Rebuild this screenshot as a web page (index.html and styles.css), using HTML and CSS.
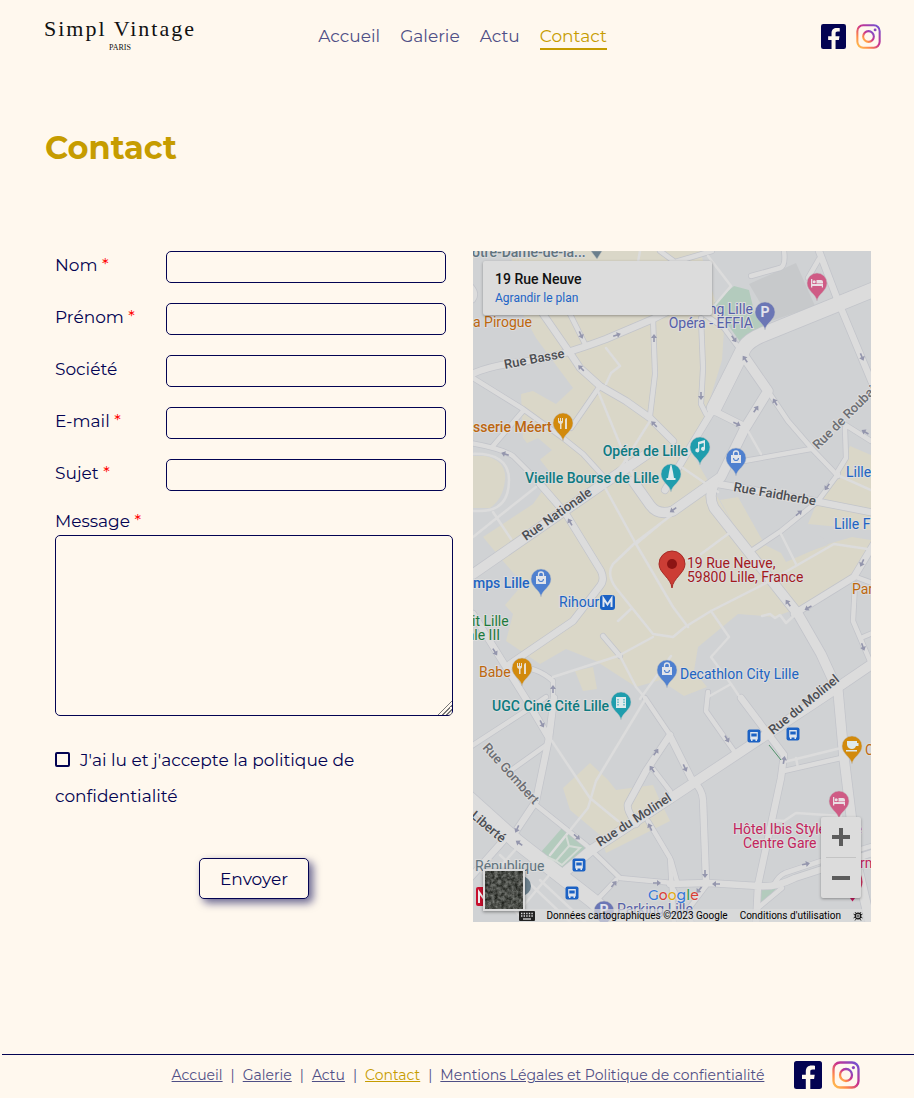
FILE: index.html
```html
<!DOCTYPE html>
<html lang="fr">
<head>
<meta charset="utf-8">
<meta name="viewport" content="width=device-width, initial-scale=1">
<title>Contact - Simpl Vintage</title>
<link rel="stylesheet" href="styles.css">
</head>
<body>
<svg class="sprite" aria-hidden="true">
  <defs>
    <linearGradient id="insta" x1="0" y1="1" x2="1" y2="0">
      <stop offset="0" stop-color="#ffc550"/><stop offset=".25" stop-color="#ff8a4a"/>
      <stop offset=".55" stop-color="#c9308e"/><stop offset="1" stop-color="#6a55d8"/>
    </linearGradient>
    <symbol id="facebook" viewBox="0 0 28 28">
      <rect width="28" height="28" rx="2.5" fill="#030352"/>
      <path d="M11.8 28V18H8v-4.3h3.8v-3.2c0-3.8 2.3-5.9 5.7-5.9 1.600 0 3 .1 3.500.2v3.700h-2.300c-1.900 0-2.400.9-2.400 2.300v2.900h4.400l-.6 4.300h-3.800v10z" fill="#fff8ee"/>
    </symbol>
    <symbol id="instagram" viewBox="0 0 28 28">
      <g fill="none" stroke="url(#insta)" stroke-width="2.300">
        <rect x="1.500" y="1.500" width="25" height="25" rx="6.500"/>
        <circle cx="14" cy="14" r="6"/>
      </g>
      <circle cx="21.400" cy="6.600" r="1.600" fill="#8a45c0"/>
    </symbol>
  </defs>
</svg>

<header class="header">
  <a class="logo" href="#"><span class="logo-name">Simpl Vintage</span><span class="logo-city">PARIS</span></a>
  <nav class="nav" aria-label="Navigation principale">
    <a href="#">Accueil</a>
    <a href="#">Galerie</a>
    <a href="#">Actu</a>
    <a class="current" href="#">Contact</a>
  </nav>
  <div class="social">
    <a href="#" aria-label="Facebook"><svg><use href="#facebook"/></svg></a>
    <a href="#" aria-label="Instagram"><svg><use href="#instagram"/></svg></a>
  </div>
</header>

<main class="main">
  <h1 class="title">Contact</h1>
  <div class="columns">
    <form class="form">
      <div class="row"><label for="nom">Nom <span class="required">*</span></label><input id="nom" type="text"></div>
      <div class="row"><label for="prenom">Prénom <span class="required">*</span></label><input id="prenom" type="text"></div>
      <div class="row"><label for="societe">Société</label><input id="societe" type="text"></div>
      <div class="row"><label for="email">E-mail <span class="required">*</span></label><input id="email" type="email"></div>
      <div class="row"><label for="sujet">Sujet <span class="required">*</span></label><input id="sujet" type="text"></div>
      <div class="message">
        <label for="message">Message <span class="required">*</span></label>
        <textarea id="message"></textarea>
      </div>
      <p class="consent"><input id="consent" type="checkbox"><label for="consent">J'ai lu et j'accepte la politique de confidentialité</label></p>
      <button class="submit" type="submit">Envoyer</button>
    </form>

    <section class="map" aria-label="Plan">
      <svg class="map-canvas" viewBox="473 251 398 671" preserveAspectRatio="xMidYMid slice">
        <defs>
          <path id="pin" d="M0 18C-1 11-10 8-10 0A10 10 0 1 1 10 0C10 8 1 11 0 18Z"/>
          <path id="arrow" d="M-4-.8H0V-3L4 0 0 3V.8H-4Z"/>
          <g id="bag"><path d="M-5-3H5V5H-5Z" fill="#e1e4ea"/><path d="M-2.500-3V-4.500A2.500 2.500 0 0 1 2.500-4.500V-3" fill="none" stroke="#e1e4ea" stroke-width="1.300"/><path d="M-2.500 0A2.500 2.500 0 0 0 2.500 0" fill="none" stroke="#4f80cf" stroke-width="1.200"/></g>
          <g id="fork" fill="#e9e0cf"><path d="M-5-5h1v3h1v-3h1v3h1v-3h1v4q0 1-1.500 2V6h-1.500V1Q-5 0-5-1Z"/><path d="M2 6V-3q0-2 2-2V6Z"/></g>
          <g id="bed" fill="#eadfe4"><path d="M-6-4h1.300V1H6V4.500H4.800V3H-4.700v1.500H-6Z"/><circle cx="-2.800" cy="-1.300" r="1.500"/><path d="M-.5-3H4Q6-3 6-1V.5H-.5Z"/></g>
          <g id="bus"><rect x="-6.500" y="-6.500" width="13" height="13" rx="2" fill="#1c62c4"/><path d="M-3.800-4h7.600V3.500H3V5H1.500V3.500h-3V5H-3V3.500h-.8Z" fill="#dfe5ee"/><path d="M-2.700-2.500h5.400V.5h-5.400Z" fill="#1c62c4"/></g>
          <g id="r-large" >
            <path d="M875 289 838 304 764 334Q749 340 744 348L731 374 714 408"/>
            <path d="M465 795 516 841 593 901 620 925"/>
          </g>
          <g id="r-wide">
            <path d="M473 574 603 484 650 452"/>
            <path d="M875 662 828 694 671 798 590 851 566 871"/>
            <path d="M633 481 650 505Q658 516 673 511L721 477 744 430 768 391 741 352"/>
            <path d="M714 484Q708 496 714 508L748 551 798 614 821 654 838 691 844 758 851 815 858 870 870 922"/>
          </g>
          <g id="r-mid">
            <path d="M470 375Q490 365 530 361 558 357 606 339L653 319 673 309"/>
            <path d="M718 484 814 501 875 513M714 408 688 451 665 490"/>
            <path d="M510 265 543 314 570 353 580 368 600 386 626 401 650 418 673 441"/>
            <path d="M819 251 838 301 875 390M714 411 744 426M473 614 506 667 526 699 549 738"/>
            <path d="M540 484 566 514 601 571Q605 580 600 586L573 621 510 664"/>
            <path d="M554 698 549 738 536 801 516 831M503 841 470 878M794 614 854 577 875 542"/>
            <path d="M670 735 646 771 628 804Q626 809 636 824M671 738 691 778Q703 790 703 800L706 881"/>
            <path d="M670 884 708 883 758 886Q775 888 795 878L875 852M741 698 784 755 781 778 758 885 756 925"/>
          </g>
          <g id="r-small">
            <path d="M473 378 523 409 563 438 583 454 603 476M523 411 493 446M470 443Q500 448 513 456L533 476"/>
            <path d="M570 314 585 344M653 319 655 374 650 416M600 386 571 428"/>
            <path d="M768 391 788 421 814 451 838 476M701 318 703 368 701 404 706 414M704 314 724 328 741 351"/>
            <path d="M751 276 780 268Q786 266 784 251M808 278 819 259M744 461 811 449M844 424 871 441M845 428 846 458 838 471"/>
            <path d="M838 474 818 501 781 531 751 551M856 577 875 584M855 584 853 621 870 661M863 637 875 632"/>
            <path d="M510 667Q535 665 553 681V699M470 747 530 708 546 697M545 746 510 771M650 765 670 791"/>
            <path d="M645 698 670 735M648 821 670 858 674 925M536 805 586 845 620 878 673 883M616 880 596 901"/>
            <path d="M708 692 706 711 734 751M774 885Q778 876 785 873L821 861 875 845M784 771 841 758M671 860 678 885"/>
            <path d="M603 636 620 656M758 908 782 888M706 886 690 907M693 925 671 885"/>
            <path d="M473 300Q478 293 470 285M675 262 712 251M675 262 660 251"/>
          </g>
          <g id="r-thin">
            <path d="M606 348 620 366 611 373 606 384M598 391 633 476M650 421 623 464 605 484M640 251 638 262"/>
            <path d="M470 454Q509 452 509 480 509 511 480 511H470M473 537 493 521 536 487M493 512 511 539"/>
            <path d="M708 256 731 286 714 306M748 431 761 454M781 534 796 564M728 534 701 554M683 468 718 492"/>
            <path d="M673 514 636 542 613 564Q606 574 616 588L653 634 673 637 685 627 711 611 768 582 834 544 875 550"/>
            <path d="M603 484 636 544 673 607 688 627M653 637 618 656 553 677M631 609 618 621M636 544 660 524"/>
            <path d="M711 611 729 637 711 657 731 684 741 699M731 684 708 697M671 656 640 699M620 656 636 687 646 699"/>
            <path d="M548 735 590 798 618 821M646 698 596 781 588 808 550 855M536 805 580 840M784 762 841 748M796 758 798 768"/>
            <path d="M771 820 784 821 796 813 841 816M835 474 871 490M762 616 770 614 775 618 780 615 786 623 797 613"/>
            <path d="M500 855 570 922M480 870 525 922M555 868 520 910M515 850 480 890M540 880 585 922"/>
          </g>
        </defs>
        <path fill="#d0d2d4" d="M473 251h398v671H473z"/>
        <g fill="#dad7c8">
          <path d="M510 251H700L715 300 724 330 722 360 706 412 690 450 714 491 748 551 798 608 775 617 738 614 698 647 694 671 707 687 684 696 660 680 636 687 596 661 566 649 540 664 506 641 513 614 505 605 523 584 503 561 483 537 533 504 553 476 523 438 521 394 533 391 556 404 573 388 536 338 523 314Z"/>
          <path d="M838 474 850 446 871 455V547L854 577 800 610 748 551 720 500 738 497 765 545 781 553 786 562 825 545 852 537 871 540V530L808 524 818 500Z"/>
          <path d="M563 788 590 763 608 780 616 790 653 785 660 801 670 821 606 853 600 835 570 810ZM473 251h10l-10 8zM473 456h12q22 5 20 24t-15 28h-17zM575 671l18-4 4 22-14 2z"/>
        </g>
        <path fill="#d0d2d4" d="M800 545l20-10 8 10-24 8zM523 445l15-7 14 12-15 12 10 14-14 14-10-26z"/>
        <path fill="#c7c9cb" d="M749 284 796 263 815 306 771 321Z"/>
        <path fill="#b3cbbd" d="M734 286 749 290 755 315 772 329 741 343 728 325 714 303ZM541 852 562 828 586 848 560 873ZM759 888h18l-18 17z"/>
        <g fill="none" stroke="#c2c4ca" stroke-linejoin="round" stroke-linecap="round">
          <use href="#r-small" stroke-width="6"/><use href="#r-mid" stroke-width="8"/><use href="#r-wide" stroke-width="11"/><use href="#r-large" stroke-width="16"/>
        </g>
        <g fill="none" stroke="#dcdcdc" stroke-linejoin="round" stroke-linecap="round">
          <use href="#r-thin" stroke-width="2.500"/><use href="#r-small" stroke-width="4.500"/><use href="#r-mid" stroke-width="6.500"/><use href="#r-wide" stroke-width="9.500"/><use href="#r-large" stroke-width="14.500"/>
        </g>
        <g fill="none" stroke="#d5dbd6" stroke-width="2"><path d="M566 835 569 846 556 861 547 857M569 846 580 848 562 865 556 861"/></g>
        <path d="M769 745 781 760" stroke="#4f8f68"/>
        <g fill="#9496ad">
          <use href="#arrow" transform="translate(617 335)rotate(-18)"/><use href="#arrow" transform="translate(581 335)rotate(65)"/>
          <use href="#arrow" transform="translate(581 368)rotate(-135)"/><use href="#arrow" transform="translate(654 338)rotate(-90)"/>
          <use href="#arrow" transform="translate(654 424)rotate(-135)"/><use href="#arrow" transform="translate(505 454)rotate(200)"/>
          <use href="#arrow" transform="translate(734 339)rotate(55)"/><use href="#arrow" transform="translate(745 359)rotate(-125)"/>
          <use href="#arrow" transform="translate(701 396)rotate(90)"/><use href="#arrow" transform="translate(756 409)rotate(-55)"/>
          <use href="#arrow" transform="translate(775 402)rotate(-120)"/><use href="#arrow" transform="translate(737 424)rotate(25)"/>
          <use href="#arrow" transform="translate(862 357)rotate(67)"/><use href="#arrow" transform="translate(865 432)rotate(210)"/>
          <use href="#arrow" transform="translate(827 487)rotate(125)"/><use href="#arrow" transform="translate(799 513)rotate(-40)"/>
          <use href="#arrow" transform="translate(673 510)rotate(145)"/><use href="#arrow" transform="translate(862 563)rotate(115)"/>
          <use href="#arrow" transform="translate(788 603)rotate(-125)"/><use href="#arrow" transform="translate(808 608)rotate(150)"/>
          <use href="#arrow" transform="translate(863 647)rotate(70)"/><use href="#arrow" transform="translate(570 522)rotate(-120)"/>
          <use href="#arrow" transform="translate(495 652)rotate(58)"/><use href="#arrow" transform="translate(553 689)rotate(-90)"/>
          <use href="#arrow" transform="translate(542 724)rotate(62)"/><use href="#arrow" transform="translate(517 829)rotate(115)"/>
          <use href="#arrow" transform="translate(519 843)rotate(215)"/><use href="#arrow" transform="translate(577 837)rotate(40)"/>
          <use href="#arrow" transform="translate(656 752)rotate(-55)"/><use href="#arrow" transform="translate(652 769)rotate(-125)"/>
          <use href="#arrow" transform="translate(650 827)rotate(-115)"/><use href="#arrow" transform="translate(614 884)rotate(-50)"/>
          <use href="#arrow" transform="translate(657 883)"/><use href="#arrow" transform="translate(716 884)rotate(180)"/>
          <use href="#arrow" transform="translate(705 874)rotate(90)"/><use href="#arrow" transform="translate(685 768)rotate(65)"/>
          <use href="#arrow" transform="translate(727 739)rotate(60)"/><use href="#arrow" transform="translate(784 760)rotate(-80)"/>
          <use href="#arrow" transform="translate(806 864)rotate(-12)"/><use href="#arrow" transform="translate(699 890)rotate(130)"/>
        </g>
        <g class="label street">
          <text transform="translate(505 369)rotate(-11)">Rue Basse</text>
          <text transform="translate(526 541)rotate(-35)">Rue Nationale</text>
          <text transform="translate(733 491)rotate(10)">Rue Faidherbe</text>
          <text class="minor" transform="translate(818 450)rotate(-45)">Rue de Roubaix</text>
          <text class="minor" transform="translate(482 748)rotate(48)">Rue Gombert</text>
          <text transform="translate(470 817)rotate(40)">Liberté</text>
          <text transform="translate(600 847)rotate(-33)">Rue du Molinel</text>
          <text transform="translate(773 735)rotate(-39)">Rue du Molinel</text>
        </g>
        <g class="label place">
          <text class="slate bold" x="472" y="257">otre-Dame-de-la...</text>
          <text class="orange" x="473" y="327">a Pirogue</text>
          <text class="indigo end" x="753" y="314">Parking Lille</text>
          <text class="indigo end" x="753" y="328">Opéra - EFFIA</text>
          <text class="orange bold" x="473" y="432">sserie Méert</text>
          <text class="teal bold end" x="688" y="456">Opéra de Lille</text>
          <text class="teal bold end" x="659" y="483">Vieille Bourse de Lille</text>
          <text class="blue" x="846" y="477">Lille</text>
          <text class="blue" x="834" y="529">Lille Flandres</text>
          <text class="red" x="687" y="568">19 Rue Neuve,</text>
          <text class="red" x="687" y="582">59800 Lille, France</text>
          <text class="orange" x="852" y="594">Parmi</text>
          <text class="blue bold" x="473" y="588">mps Lille</text>
          <text class="blue" x="559" y="607">Rihour</text>
          <text class="green" x="472" y="626">it Lille</text>
          <text class="green end" x="500" y="640">ale III</text>
          <text class="orange" x="479" y="677">Babe</text>
          <text class="blue" x="680" y="679">Decathlon City Lille</text>
          <text class="teal bold end" x="609" y="711">UGC Ciné Cité Lille</text>
          <text class="orange" x="865" y="755">C</text>
          <text class="pink" x="733" y="834">Hôtel Ibis Styles Lille</text>
          <text class="pink" x="743" y="848">Centre Gare</text>
          <text class="pink" x="860" y="868">rm</text>
          <text class="slate" x="475" y="871">République</text>
          <text class="indigo" x="617" y="914">Parking Lille</text>
        </g>
        <g stroke="#bfc0c2" stroke-width=".5">
          <path d="M591 251h11l-5 8z" fill="#6b7f8c"/>
          <use href="#pin" x="563" y="423" fill="#d28a0c"/><use href="#pin" x="522" y="668" fill="#d28a0c"/><use href="#pin" x="852" y="746" fill="#d28a0c"/>
          <use href="#pin" x="817" y="283" fill="#cf5b85"/><use href="#pin" x="839" y="801" fill="#cf5b85"/>
          <use href="#pin" x="765" y="312" fill="#6b76b5"/><use href="#pin" x="604" y="911" fill="#6b76b5"/>
          <use href="#pin" x="700" y="447" fill="#1f9dad"/><use href="#pin" x="671" y="474" fill="#1f9dad"/><use href="#pin" x="621" y="702" fill="#1f9dad"/>
          <use href="#pin" x="736" y="458" fill="#4f80cf"/><use href="#pin" x="541" y="579" fill="#4f80cf"/><use href="#pin" x="667" y="670" fill="#4f80cf"/>
        </g>
        <use href="#fork" x="563" y="423"/><use href="#fork" x="522" y="668"/>
        <use href="#bed" x="817" y="283"/><use href="#bed" x="839" y="801"/>
        <use href="#bag" x="736" y="458"/><use href="#bag" x="541" y="579"/><use href="#bag" x="667" y="670"/>
        <g class="pin-letter"><text x="765" y="317">P</text><text x="604" y="915">P</text></g>
        <g fill="#dfeaec">
          <path d="M698 442l7-2v9a2 2 0 1 1-1.300-2v-4l-4.400 1.300v6.200a2 2 0 1 1-1.300-2z"/>
          <path d="M670.500 465h1l1.500 7 1 6h1.500v2h-9v-2h1.500l1-6z"/>
          <path d="M616 697h10v11h-10z"/><path d="M618 699v7M624 699v7" stroke="#1f9dad" stroke-dasharray="1.500 1"/>
          <path d="M847 741h10v2h1.500v3H856q-1 3-4 3-4 0-5-4zM846 750h11v1.500h-11z"/>
        </g>
        <path d="M672 588C671 578 659 573 659 564a13 13 0 1 1 26 0C685 573 673 578 672 588Z" fill="#cc3d35" stroke="#a62a26"/><circle cx="672" cy="564" r="5" fill="#8c1414"/>
        <rect x="600" y="595" width="15" height="15" rx="3" fill="#1c62c4"/><path d="M603.500 607v-8.500l4 6 4-6v8.500" fill="none" stroke="#e3e8f0" stroke-width="2"/>
        <use href="#bus" x="754" y="736"/><use href="#bus" x="793" y="734"/><use href="#bus" x="579" y="865"/><use href="#bus" x="572" y="893"/>
        <path d="M484 887h-6q-2 0-2 2v15q0 2 2 2h6z" fill="#c8102e"/><path d="M479 903v-11l5 7" fill="none" stroke="#eee" stroke-width="2"/>
        <circle cx="521" cy="886" r="10" fill="#6b7f8c"/>
        <path d="M850 898h5l-2.500 3.500z" fill="#c2185b"/><path d="M861 875q3 7 0 13z" fill="#c9305c"/>
      </svg>
      <div class="place-card"><strong>19 Rue Neuve</strong><a href="#">Agrandir le plan</a></div>
      <button class="satellite" type="button" aria-label="Vue satellite">
        <svg><filter id="ground" color-interpolation-filters="sRGB"><feTurbulence type="fractalNoise" baseFrequency=".3" numOctaves="4" seed="4"/><feColorMatrix values=".55 0 0 0 .02  .55 0 0 0 .03  .55 0 0 0 .01  0 0 0 0 1"/></filter><rect width="100%" height="100%" filter="url(#ground)"/></svg>
      </button>
      <div class="zoom">
        <button type="button" aria-label="Zoom avant"><svg viewBox="0 0 18 18"><path d="M0 9h18M9 0v18"/></svg></button>
        <button type="button" aria-label="Zoom arrière"><svg viewBox="0 0 18 18"><path d="M0 9h18"/></svg></button>
      </div>
      <div class="google"><span>G</span><span>o</span><span>o</span><span>g</span><span>l</span><span>e</span></div>
      <div class="credits">
        <svg class="keyboard" viewBox="0 0 16 10"><rect width="16" height="10" rx="1" fill="#222"/><path d="M2 2.500h12M2 5h12" stroke="#ddd" stroke-width="1.400" stroke-dasharray="1.400 1.200"/><path d="M4 8h8" stroke="#ddd" stroke-width="1.300"/></svg>
        <span>Données cartographiques ©2023 Google</span>
        <a href="#">Conditions d'utilisation</a>
        <svg class="bug" viewBox="0 0 10 10" fill="none" stroke="#111" stroke-width=".8"><circle cx="5" cy="5" r="2.800" stroke-width="1.200"/><path d="M3.500 4.200h3M3.500 5.800h3M3 2.500 2 1M7 2.500 8 1M2.500 4 .5 3M7.500 4 9.500 3M2.500 6 .5 7M7.500 6 9.500 7M3 8 2 9.500M7 8 8 9.500"/></svg>
      </div>
    </section>
  </div>
</main>

<footer class="footer">
  <nav class="footer-nav" aria-label="Pied de page">
    <a href="#">Accueil</a><span>|</span>
    <a href="#">Galerie</a><span>|</span>
    <a href="#">Actu</a><span>|</span>
    <a class="current" href="#">Contact</a><span>|</span>
    <a href="#">Mentions Légales et Politique de confientialité</a>
  </nav>
  <div class="social social-footer">
    <a href="#" aria-label="Facebook"><svg><use href="#facebook"/></svg></a>
    <a href="#" aria-label="Instagram"><svg><use href="#instagram"/></svg></a>
  </div>
</footer>
</body>
</html>
```
FILE: styles.css
```css
:root {
  --navy: #030352;
  --link: #4f4f86;
  --gold: #c69c00;
  --cream: #fff8ee;
}
* { box-sizing: border-box; }
body {
  margin: 0;
  min-height: 100vh;
  display: flex;
  flex-direction: column;
  background: var(--cream);
  color: var(--navy);
  font: 400 17px/24px Montserrat, Inter, "Open Sans", sans-serif;
}
.sprite { position: absolute; width: 0; height: 0; }

.header {
  display: grid;
  grid-template-columns: 1fr auto 1fr;
  align-items: center;
  height: 72px;
  padding: 0 33px 0 44px;
}
.logo {
  justify-self: start;
  display: flex;
  flex-direction: column;
  align-items: center;
  color: #111;
  text-decoration: none;
  font-family: "Liberation Serif", serif;
  font-weight: 400;
}
.logo-name { font-size: 22px; line-height: 24px; letter-spacing: 2px; }
.logo-city { font-size: 8px; line-height: 14px; }
.nav { display: flex; gap: 20px; padding-top: 2px; }
.nav a {
  color: var(--link);
  text-decoration: none;
  border-bottom: 2px solid transparent;
}
.nav .current { color: var(--gold); border-color: var(--gold); }
.social { display: flex; gap: 10px; justify-self: end; }
.social a { display: flex; }
.social svg { width: 25px; height: 25px; }

.main { padding: 52px 43px 40px 55px; }
.title {
  margin: 0 0 79px -10px;
  color: var(--gold);
  font-size: 32px;
  line-height: 48px;
  font-weight: 700;
}
.columns {
  display: grid;
  grid-template-columns: 1fr 1fr;
  gap: 20px;
}
.form { display: flex; flex-direction: column; }
.row {
  display: grid;
  grid-template-columns: 111px 1fr;
  margin: 0 7px 20px 0;
  line-height: 28px;
}
input, textarea {
  border: 1px solid var(--navy);
  border-radius: 5px;
  background: transparent;
  color: var(--navy);
  font: inherit;
}
.row input { width: 100%; height: 32px; padding: 0 8px; }
.required { color: red; }
.message { display: flex; flex-direction: column; gap: 2px; margin-top: -2px; }
.message textarea { height: 181px; padding: 8px; }
.message textarea::-webkit-resizer {
  background: linear-gradient(135deg,
    transparent 50%, #777 50% 56%, transparent 56% 64%,
    #777 64% 70%, transparent 70% 78%, #777 78% 84%,
    transparent 84% 91%, #777 91% 96%, transparent 96%);
}
.consent { margin: 26px 0 44px; line-height: 36px; }
.consent input {
  appearance: none;
  width: 15px;
  height: 15px;
  margin: 0 10px 0 0;
  border-width: 2px;
  border-radius: 2px;
  vertical-align: -1px;
}
.submit {
  align-self: center;
  height: 41px;
  padding: 0 20px;
  border: 1px solid var(--navy);
  border-radius: 5px;
  background: var(--cream);
  box-shadow: 4px 4px 8px #03035299;
  color: var(--navy);
  font: inherit;
}

.map {
  position: relative;
  height: 671px;
  overflow: hidden;
  font-family: Roboto, sans-serif;
}
.map-canvas { display: block; width: 100%; height: 100%; }
.label text { paint-order: stroke; stroke: #dcdcdc; stroke-width: 2px; }
.street { font-size: 13px; font-weight: 500; fill: #4b4d52; }
.street .minor { fill: #6c6e73; }
.place { font-size: 14px; }
.end { text-anchor: end; }
.bold { font-weight: 500; }
.slate { fill: #61747f; }
.orange { fill: #bd670f; }
.indigo { fill: #5560a8; }
.teal { fill: #0d7a80; }
.blue { fill: #2164c2; }
.red { fill: #a3191d; }
.green { fill: #1c7a3d; }
.pink { fill: #c2255c; }
.pin-letter { font-size: 14px; font-weight: 700; text-anchor: middle; fill: #e2e3ec; }
.place-card {
  position: absolute;
  top: 10px;
  left: 10px;
  width: 229px;
  height: 54px;
  padding: 8px 12px;
  display: flex;
  flex-direction: column;
  background: #dcdcdc;
  border-radius: 2px;
  box-shadow: 0 1px 3px #0005;
  color: #111;
}
.place-card strong { font-size: 14px; line-height: 20px; font-weight: 500; }
.place-card a { font-size: 12px; line-height: 18px; color: #1c65c6; text-decoration: none; }
.satellite {
  position: absolute;
  left: 10px;
  bottom: 11px;
  width: 42px;
  height: 42px;
  padding: 0;
  border: 2px solid #dcdcdc;
  background: #454844;
  box-shadow: 0 1px 3px #0006;
}
.satellite svg { display: block; width: 100%; height: 100%; }
.zoom {
  position: absolute;
  right: 10px;
  bottom: 24px;
  width: 40px;
  padding: 0 5px;
  background: #dcdcdc;
  border-radius: 2px;
  box-shadow: 0 1px 3px #0005;
}
.zoom button {
  display: grid;
  place-items: center;
  width: 100%;
  height: 40px;
  padding: 0;
  border: 0;
  background: none;
}
.zoom button + button { height: 41px; border-top: 1px solid #c4c4c4; }
.zoom svg { width: 18px; height: 18px; stroke: #5c5c5c; stroke-width: 4; }
.google {
  position: absolute;
  left: 175px;
  bottom: 15px;
  font: 500 14px/24px Montserrat, "Open Sans", sans-serif;
  color: #3478d8;
  text-shadow: 0 0 2px #eee;
}
.google span:nth-child(2), .google span:nth-child(6) { color: #d93d34; }
.google span:nth-child(3) { color: #e2a90e; }
.google span:nth-child(5) { color: #2f9b50; }
.credits {
  position: absolute;
  right: 0;
  bottom: 0;
  display: flex;
  align-items: center;
  gap: 12px;
  height: 13px;
  padding: 0 8px 0 0;
  background: #dcdcdcb3;
  color: #000;
  font-size: 10px;
  line-height: 13px;
}
.credits a { color: inherit; text-decoration: none; }
.keyboard { width: 16px; height: 10px; }
.bug { width: 10px; height: 10px; }

.footer {
  display: grid;
  grid-template-columns: 1fr auto 1fr;
  align-items: start;
  height: 44px;
  margin: auto 0 0 2px;
  padding: 6px 0 0 20px;
  border-top: 1px solid var(--navy);
  font-size: 14px;
  line-height: 28px;
}
.footer-nav { grid-column: 2; display: flex; gap: 8px; color: var(--link); }
.footer-nav a { color: inherit; }
.footer-nav .current { color: var(--gold); }
.social-footer { justify-self: start; margin-left: 30px; }
.social-footer svg { width: 28px; height: 28px; }
```
